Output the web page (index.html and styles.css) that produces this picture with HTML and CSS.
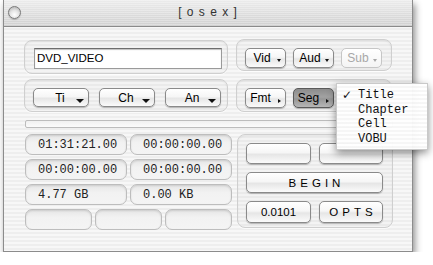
FILE: index.html
```html
<!DOCTYPE html>
<html lang="en">
<head>
    <meta charset="UTF-8">
    <title>[ o s e x ]</title>
    <link rel="stylesheet" href="styles.css">
</head>
<body>
    <div class="window">
        <div class="titlebar">
            <span class="close"></span>
            <span class="title">[ o s e x ]</span>
        </div>

        <div class="content">
            <!-- Source name + stream pickers -->
            <div class="row">
                <div class="group name-group">
                    <div class="field">DVD_VIDEO</div>
                </div>
                <div class="group small-group">
                    <button class="btn small popup">Vid</button>
                    <button class="btn small popup">Aud</button>
                    <button class="btn small popup disabled">Sub</button>
                </div>
            </div>

            <div class="row second">
                <div class="group pick-group">
                    <button class="btn wide popup big">Ti</button>
                    <button class="btn wide popup big">Ch</button>
                    <button class="btn wide popup big">An</button>
                </div>
                <div class="group small-group">
                    <button class="btn small sub">Fmt</button>
                    <button class="btn small sub pressed">Seg</button>
                </div>
            </div>

            <!-- Progress -->
            <div class="progress"></div>

            <!-- Readouts + actions -->
            <div class="row third">
                <div class="readouts">
                    <div class="pairs">
                        <div class="readout">01:31:21.00</div>
                        <div class="readout">00:00:00.00</div>
                        <div class="readout">00:00:00.00</div>
                        <div class="readout">00:00:00.00</div>
                        <div class="readout">4.77 GB</div>
                        <div class="readout">0.00 KB</div>
                    </div>
                    <div class="triples">
                        <div class="readout"></div>
                        <div class="readout"></div>
                        <div class="readout"></div>
                    </div>
                </div>
                <div class="group actions">
                    <button class="btn act"></button>
                    <button class="btn act"></button>
                    <button class="btn act full spaced">BEGIN</button>
                    <button class="btn act tall">0.0101</button>
                    <button class="btn act tall spaced">OPTS</button>
                </div>
            </div>
        </div>

        <!-- Open Seg menu -->
        <ul class="menu">
            <li><span class="check">&#10003;</span>Title</li>
            <li><span class="check"></span>Chapter</li>
            <li><span class="check"></span>Cell</li>
            <li><span class="check"></span>VOBU</li>
        </ul>
    </div>
</body>
</html>
```

FILE: styles.css
```css
/* General Reset */
* {
    margin: 0;
    padding: 0;
    box-sizing: border-box;
}

body {
    font-family: 'Liberation Sans', Arial, sans-serif;
    font-size: 11px;
    background-color: #fff;
    color: #000;
    padding-left: 3px;
}

/* Window */
.window {
    position: relative;
    width: 410px;
    height: 252px;
    border: 1px solid #8c8c8c;
    border-top: none;
    background: repeating-linear-gradient(to bottom, #eeeeee 0, #eeeeee 2px, #f7f7f7 2px, #f7f7f7 4px);
    box-shadow: 2px 4px 7px rgba(0, 0, 0, 0.45);
}

.titlebar {
    display: grid;
    align-items: center;
    height: 27px;
    border-bottom: 1px solid #8a8a8a;
    background:
        repeating-linear-gradient(to bottom, rgba(255, 255, 255, 0.3) 0, rgba(255, 255, 255, 0.3) 1px, transparent 1px, transparent 2px),
        linear-gradient(#ececec, #d0d0d0);
}

.close,
.title {
    grid-area: 1 / 1;
}

.close {
    justify-self: start;
    width: 13px;
    height: 13px;
    margin: -2px 0 0 4px;
    border-radius: 50%;
    border: 1px solid #7a7a7a;
    background: radial-gradient(circle at 50% 70%, #ffffff 0, #e4e4e4 45%, #a9a9a9 100%);
    box-shadow: 0 1px 1px rgba(0, 0, 0, 0.2);
}

.title {
    justify-self: center;
    margin-top: -2px;
    font-size: 12px;
    letter-spacing: 1px;
    color: #333;
    white-space: pre;
}

/* Content */
.content {
    padding: 12px 0 0 20px;
}

.row {
    display: flex;
    gap: 8px;
    align-items: flex-start;
}

.row.second {
    margin-top: 5px;
}

.row.third {
    margin-top: 6px;
    gap: 5px;
}

.group {
    border: 1px solid #cfcfcf;
    border-radius: 8px;
    background-color: rgba(0, 0, 0, 0.015);
    box-shadow: inset 0 1px 2px rgba(0, 0, 0, 0.06), 0 1px 0 rgba(255, 255, 255, 0.7);
}

.name-group {
    width: 204px;
    height: 34px;
    margin-top: 1px;
    padding: 7px 0 0 9px;
}

.field {
    width: 188px;
    height: 21px;
    padding: 3px 0 0 2px;
    background: #fff;
    border: 1px solid #9a9a9a;
    border-top-color: #6e6e6e;
    box-shadow: inset 0 1px 1px rgba(0, 0, 0, 0.25);
    font-size: 11.5px;
}

.small-group {
    display: flex;
    gap: 7px;
    width: 156px;
    height: 32px;
    padding: 8px 0 0 8px;
}

.row.second .small-group {
    height: 33px;
}

.pick-group {
    display: flex;
    gap: 10px;
    width: 204px;
    height: 33px;
    padding: 8px 0 0 8px;
}

/* Buttons */
.btn {
    position: relative;
    font-family: 'Liberation Sans', Arial, sans-serif;
    font-size: 11.5px;
    color: #000;
    border: 1px solid #8a8a8a;
    border-radius: 5px;
    background: linear-gradient(#ffffff 0%, #f6f6f6 45%, #e6e6e6 55%, #fbfbfb 100%);
    box-shadow: 0 1px 1px rgba(0, 0, 0, 0.25);
}

.btn.small {
    width: 41px;
    height: 20px;
    padding-right: 7px;
    font-size: 12px;
}

.btn.small.sub {
    padding-right: 10px;
}

.btn.wide {
    width: 56px;
    height: 19px;
    padding-right: 2px;
    font-size: 12px;
}

/* little pop-up arrows */
.popup::after {
    content: "";
    position: absolute;
    right: 4px;
    bottom: 5px;
    border-left: 2.5px solid transparent;
    border-right: 2.5px solid transparent;
    border-top: 3px solid #111;
}

.popup.big::after {
    right: 4px;
    bottom: 3px;
    border-left-width: 4px;
    border-right-width: 4px;
    border-top-width: 4px;
}

.sub::after {
    content: "";
    position: absolute;
    right: 4px;
    bottom: 4px;
    border-top: 2.5px solid transparent;
    border-bottom: 2.5px solid transparent;
    border-left: 3px solid #111;
}

.btn.disabled {
    color: #a8a8a8;
    border-color: #c6c6c6;
    background: linear-gradient(#ffffff, #f4f4f4);
    box-shadow: none;
}

.btn.disabled::after {
    border-top-color: #a8a8a8;
}

.btn.pressed {
    border-color: #5a5a5a;
    background: linear-gradient(#8c8c8c 0%, #a2a2a2 45%, #969696 55%, #b6b6b6 100%);
}

/* Progress bar */
.progress {
    width: 368px;
    height: 8px;
    margin: 8px 0 0 1px;
    border: 1px solid #bcbcbc;
    border-radius: 2px;
    background: linear-gradient(#f0f0f0, #fbfbfb);
}

/* Readouts */
.readouts {
    width: 207px;
    margin-left: 1px;
}

.pairs {
    display: grid;
    grid-template-columns: 102px 102px;
    column-gap: 3px;
    row-gap: 4px;
}

.triples {
    display: grid;
    grid-template-columns: 67px 67px 67px;
    gap: 3px;
    margin-top: 4px;
}

.readout {
    height: 21px;
    padding: 3px 0 0 12px;
    border: 1px solid #bdbdbd;
    border-radius: 7px;
    background: linear-gradient(#e6e6e6, #f2f2f2 40%, #f4f4f4);
    box-shadow: inset 0 1px 2px rgba(0, 0, 0, 0.12);
    font-family: 'Liberation Mono', 'Courier New', monospace;
    font-size: 12px;
    color: #222;
}

/* Actions group */
.actions {
    display: grid;
    grid-template-columns: 65px 64px;
    grid-template-rows: 21px 21px 22px;
    column-gap: 8px;
    row-gap: 8px;
    width: 156px;
    height: 94px;
    padding: 8px 0 0 8px;
}

.btn.full {
    grid-column: 1 / 3;
}

.btn.spaced {
    letter-spacing: 4px;
    padding-left: 4px;
}

/* Pop-up menu */
.menu {
    position: absolute;
    left: 332px;
    top: 83px;
    width: 92px;
    height: 67px;
    padding-top: 4px;
    list-style: none;
    background: repeating-linear-gradient(to bottom, rgba(255, 255, 255, 0.97) 0, rgba(255, 255, 255, 0.97) 2px, rgba(246, 246, 246, 0.97) 2px, rgba(246, 246, 246, 0.97) 4px);
    border: 1px solid #c9c9c9;
    box-shadow: 0 3px 8px rgba(0, 0, 0, 0.45);
}

.menu li {
    display: flex;
    height: 14.7px;
    line-height: 14.7px;
    padding-left: 5px;
    font-family: 'Liberation Mono', 'Courier New', monospace;
    font-size: 12px;
    color: #111;
}

.check {
    display: inline-block;
    width: 16px;
    font-family: 'DejaVu Sans', sans-serif;
    font-size: 12px;
}
```
